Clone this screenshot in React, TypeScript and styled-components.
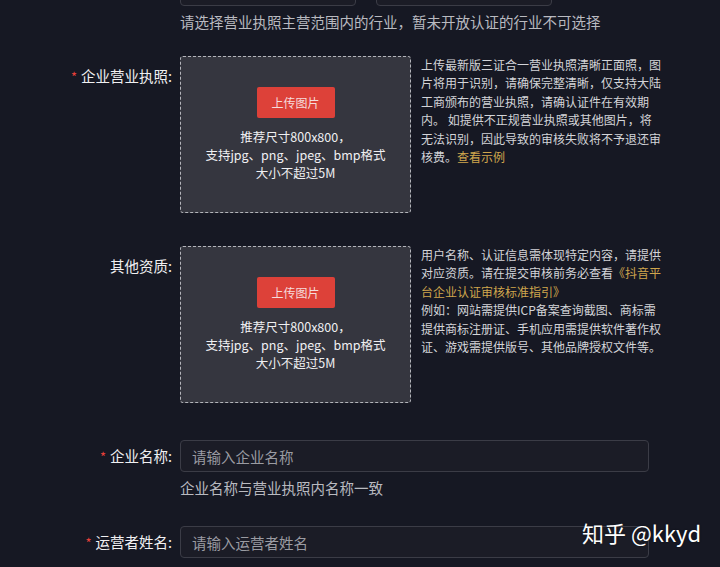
import React from 'react';
import styled, { createGlobalStyle } from 'styled-components';

const GlobalStyle = createGlobalStyle`
  html, body {
    margin: 0;
    padding: 0;
    background: #161823;
    overflow: hidden;
  }
  body {
    font-family: "Noto Sans CJK SC", "Noto Sans", sans-serif;
    color: #e6e6e8;
  }
`;

interface UploadRowProps {
  label: string;
  required?: boolean;
  gap: number;
  children: React.ReactNode;
}

const UploadRow: React.FC<UploadRowProps> = ({ label, required, gap, children }) => (
  <Row $gap={gap}>
    <Label $top={11}>
      {required && <Star>*</Star>}
      {label}:
    </Label>
    <UploadArea>
      <UploadBox>
        <UploadButton>上传图片</UploadButton>
        <UploadTips>
          推荐尺寸800x800，
          <br />
          支持jpg、png、jpeg、bmp格式
          <br />
          大小不超过5M
        </UploadTips>
      </UploadBox>
      <Desc>{children}</Desc>
    </UploadArea>
  </Row>
);

interface InputRowProps {
  label: string;
  placeholder: string;
  hint?: string;
  gap: number;
}

const InputRow: React.FC<InputRowProps> = ({ label, placeholder, hint, gap }) => (
  <Row $gap={gap}>
    <Label $top={7}>
      <Star>*</Star>
      {label}:
    </Label>
    <Field>
      <Input placeholder={placeholder} />
      {hint && <Hint>{hint}</Hint>}
    </Field>
  </Row>
);

const App: React.FC = () => {
  return (
    <>
      <GlobalStyle />
      <Page>
        <Row $gap={24}>
          <Label $top={0} />
          <Field>
            <Selects>
              <Select />
              <Select />
            </Selects>
            <TopHint>请选择营业执照主营范围内的行业，暂未开放认证的行业不可选择</TopHint>
          </Field>
        </Row>

        <UploadRow label="企业营业执照" required gap={33}>
          上传最新版三证合一营业执照清晰正面照，图片将用于识别，请确保完整清晰，仅支持大陆工商颁布的营业执照，请确认证件在有效期内。 如提供不正规营业执照或其他图片，将无法识别，因此导致的审核失败将不予退还审核费。
          <Link>查看示例</Link>
        </UploadRow>

        <UploadRow label="其他资质" gap={37}>
          用户名称、认证信息需体现特定内容，请提供对应资质。请在提交审核前务必查看
          <Link>《抖音平台企业认证审核标准指引》</Link>
          <br />
          例如：网站需提供ICP备案查询截图、商标需提供商标注册证、手机应用需提供软件著作权证、游戏需提供版号、其他品牌授权文件等。
        </UploadRow>

        <InputRow label="企业名称" placeholder="请输入企业名称" hint="企业名称与营业执照内名称一致" gap={28} />
        <InputRow label="运营者姓名" placeholder="请输入运营者姓名" gap={0} />
      </Page>
      <Watermark>知乎 @kkyd</Watermark>
    </>
  );
};

export default App;

const Page = styled.div`
  width: 720px;
  margin-top: -26px;
  display: flex;
  flex-direction: column;
`;

const Row = styled.div<{ $gap: number }>`
  display: flex;
  align-items: flex-start;
  flex-shrink: 0;
  margin-bottom: ${(p) => p.$gap}px;
`;

const Label = styled.div<{ $top: number }>`
  width: 172px;
  flex-shrink: 0;
  padding-top: ${(p) => p.$top}px;
  padding-right: 8px;
  box-sizing: content-box;
  text-align: right;
  font-size: 14.5px;
  line-height: 18px;
  color: #f0f0f2;
  white-space: nowrap;
`;

const Star = styled.span`
  color: #e8403a;
  margin-right: 4px;
  font-size: 13px;
`;

const Field = styled.div`
  display: flex;
  flex-direction: column;
`;

const Selects = styled.div`
  display: flex;
  gap: 20px;
`;

const Select = styled.div`
  width: 174px;
  height: 30px;
  border: 1px solid #3b3c46;
  border-radius: 4px;
  background: #1b1c26;
`;

const TopHint = styled.div`
  margin-top: 6px;
  font-size: 14.5px;
  line-height: 20px;
  color: #b9bac0;
`;

const UploadArea = styled.div`
  display: flex;
  gap: 10px;
`;

const UploadBox = styled.div`
  width: 229px;
  height: 155px;
  flex-shrink: 0;
  box-sizing: content-box;
  border: 1px dashed #b4b5bb;
  border-radius: 3px;
  background: #35363f;
  display: flex;
  flex-direction: column;
  align-items: center;
`;

const UploadButton = styled.div`
  margin-top: 30px;
  width: 78px;
  height: 31px;
  border-radius: 2px;
  background: #dd4139;
  color: #f5dcdc;
  font-size: 12px;
  display: flex;
  align-items: center;
  justify-content: center;
`;

const UploadTips = styled.div`
  margin-top: 10px;
  font-size: 12.5px;
  line-height: 18px;
  text-align: center;
  color: #f0f0f2;
`;

const Desc = styled.div`
  width: 241px;
  font-size: 12px;
  line-height: 18.4px;
  color: #d3d4d8;
`;

const Link = styled.span`
  color: #cfa64d;
`;

const Input = styled.input`
  width: 469px;
  height: 32px;
  box-sizing: border-box;
  border: 1px solid #3b3c46;
  border-radius: 4px;
  background: #1b1c26;
  padding: 0 11px;
  font-family: "Noto Sans CJK SC", sans-serif;
  font-size: 14.5px;
  color: #e6e6e8;
  outline: none;
  &::placeholder {
    color: #9a9ba2;
  }
`;

const Hint = styled.div`
  margin-top: 6px;
  font-size: 14.5px;
  line-height: 20px;
  color: #b9bac0;
`;

const Watermark = styled.div`
  position: absolute;
  left: 582px;
  top: 517px;
  font-family: "Noto Sans CJK SC", "Noto Sans", sans-serif;
  font-size: 22px;
  line-height: 30px;
  color: #ffffff;
  text-shadow: 0 0 2px rgba(0, 0, 0, 0.4);
`;
